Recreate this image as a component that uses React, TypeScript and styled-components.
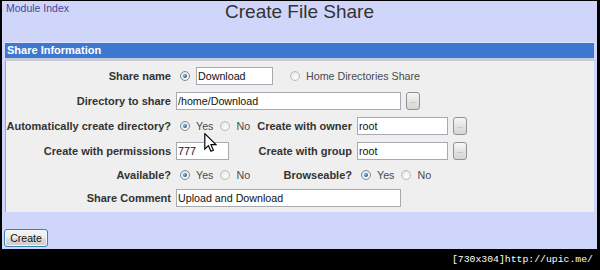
import styled, { createGlobalStyle } from 'styled-components';

const GlobalStyle = createGlobalStyle`
  html, body {
    margin: 0;
    padding: 0;
    background: #000;
  }
  body {
    font-family: "Liberation Sans", Arial, sans-serif;
  }
`;

const Frame = styled.div`
  position: relative;
  width: 600px;
  height: 270px;
  box-sizing: border-box;
  padding: 1px 3px 0 2px;
`;

const Page = styled.div`
  height: 248px;
  background: #cfd6fa;
  display: flex;
  flex-direction: column;
`;

const TopBar = styled.div`
  display: grid;
  grid-template-columns: 1fr auto 1fr;
  height: 22px;
`;

const ModuleLink = styled.a`
  font-size: 10.5px;
  color: #45459e;
  text-decoration: none;
  padding: 1px 0 0 4px;
  align-self: start;
`;

const Title = styled.h1`
  margin: 0;
  font-size: 19px;
  line-height: 22px;
  font-weight: normal;
  color: #333;
`;

const Panel = styled.div`
  margin: 19px 3px 0 3px;
  border-top: 1px solid #e1e6fd;
`;

const PanelHeader = styled.div`
  height: 15px;
  line-height: 15px;
  padding-left: 2px;
  background: #3d78d0;
  border-bottom: 3px solid #c6cad9;
  color: #fff;
  font-size: 11px;
  font-weight: bold;
`;

const Form = styled.div`
  display: grid;
  grid-template-columns: 166px 76px 97px 1fr;
  grid-template-rows: 25px 25px 25px 25px 24px 22px;
  column-gap: 4px;
  padding: 2px 0 3px;
  background: #efefef;
  border-left: 1px solid #a3a7b3;
`;

const Label = styled.div`
  align-self: center;
  text-align: right;
  padding-right: 1px;
  white-space: nowrap;
  font-size: 11px;
  font-weight: bold;
  color: #333;
`;

const Cell = styled.div<{ $span?: number }>`
  display: flex;
  align-items: center;
  grid-column: span ${p => p.$span ?? 1};
`;

const Radio = styled.span<{ $checked?: boolean; $gap?: number }>`
  position: relative;
  flex: none;
  width: 10px;
  height: 10px;
  box-sizing: border-box;
  border-radius: 50%;
  margin: 0 6px 0 ${p => p.$gap ?? 4}px;
  border: 1px solid ${p => (p.$checked ? '#7f8a96' : '#b9bdc2')};
  background: radial-gradient(circle at 60% 65%, #ffffff 0%, #ebebeb 60%, #d6d8db 100%);

  &::after {
    content: '';
    display: ${p => (p.$checked ? 'block' : 'none')};
    position: absolute;
    left: 2px;
    top: 2px;
    width: 4px;
    height: 4px;
    border-radius: 50%;
    background: radial-gradient(circle at 35% 35%, #8fc4ef 0%, #2f6fa8 55%, #173e66 100%);
  }
`;

const Option = styled.span`
  font-size: 10.7px;
  color: #4a4a4a;
  margin-right: 3px;
  white-space: nowrap;
`;

const TextInput = styled.input<{ $w: number }>`
  width: ${p => p.$w}px;
  height: 18px;
  box-sizing: border-box;
  margin: 0;
  padding: 0 1px;
  border: 1px solid #a7abb0;
  background: #fff;
  font-family: "Liberation Sans", Arial, sans-serif;
  font-size: 10.7px;
  color: #111;
  outline: none;
`;

const BrowseButton = styled.button`
  flex: none;
  width: 14px;
  height: 18px;
  margin: 0 0 0 5px;
  padding: 0;
  box-sizing: border-box;
  border: 1px solid #8f9194;
  border-radius: 3px;
  background: linear-gradient(#f7f7f7, #e3e3e3 50%, #d6d6d6);
  color: #8a8a8a;
  font-family: "Liberation Sans", Arial, sans-serif;
  font-size: 7px;
  line-height: 14px;
`;

const CreateButton = styled.button`
  align-self: flex-start;
  width: 44px;
  height: 18px;
  margin: 17px 0 0 2px;
  padding: 0;
  box-sizing: border-box;
  border: 1px solid #3c7fb1;
  border-radius: 3px;
  box-shadow: inset 0 0 0 1px #f4f8fb;
  background: linear-gradient(#f4f4f4, #ececec 48%, #dcdcdc 52%, #cdcdcd);
  font-family: "Liberation Sans", Arial, sans-serif;
  font-size: 10.5px;
  color: #111;
`;

const Footer = styled.div`
  height: 21px;
  line-height: 21px;
  text-align: right;
  padding-right: 4px;
  font-family: "Liberation Mono", "DejaVu Sans Mono", monospace;
  font-size: 9.8px;
  color: #fff;
`;

const Cursor = styled.svg`
  position: absolute;
  left: 203px;
  top: 133px;
`;

const YesNo = () => (
  <>
    <Radio $checked />
    <Option>Yes</Option>
    <Radio />
    <Option>No</Option>
  </>
);

export default function App() {
  return (
    <Frame>
      <GlobalStyle />
      <Page>
        <TopBar>
          <ModuleLink href="#">Module Index</ModuleLink>
          <Title>Create File Share</Title>
          <div />
        </TopBar>

        <Panel>
          <PanelHeader>Share Information</PanelHeader>
          <Form>
            <Label>Share name</Label>
            <Cell $span={3}>
              <Radio $checked />
              <TextInput $w={77} defaultValue="Download" readOnly />
              <Radio $gap={17} />
              <Option>Home Directories Share</Option>
            </Cell>

            <Label>Directory to share</Label>
            <Cell $span={3}>
              <TextInput $w={225} defaultValue="/home/Download" readOnly />
              <BrowseButton>...</BrowseButton>
            </Cell>

            <Label>Automatically create directory?</Label>
            <Cell>
              <YesNo />
            </Cell>
            <Label>Create with owner</Label>
            <Cell>
              <TextInput $w={91} defaultValue="root" readOnly />
              <BrowseButton>...</BrowseButton>
            </Cell>

            <Label>Create with permissions</Label>
            <Cell>
              <TextInput $w={53} defaultValue="777" readOnly />
            </Cell>
            <Label>Create with group</Label>
            <Cell>
              <TextInput $w={91} defaultValue="root" readOnly />
              <BrowseButton>...</BrowseButton>
            </Cell>

            <Label>Available?</Label>
            <Cell>
              <YesNo />
            </Cell>
            <Label>Browseable?</Label>
            <Cell>
              <YesNo />
            </Cell>

            <Label>Share Comment</Label>
            <Cell $span={3}>
              <TextInput $w={225} defaultValue="Upload and Download" readOnly />
            </Cell>
          </Form>
        </Panel>

        <CreateButton>Create</CreateButton>
      </Page>
      <Footer>[730x304]http://upic.me/</Footer>

      <Cursor width="15" height="19" viewBox="0 0 12 18">
        <path
          d="M0.6 0.6 V15.2 L4 12 L6.4 17.3 L8.7 16.3 L6.4 11 L11.2 11 Z"
          fill="#fff"
          stroke="#000"
          strokeWidth="1.1"
          strokeLinejoin="miter"
        />
      </Cursor>
    </Frame>
  );
}
